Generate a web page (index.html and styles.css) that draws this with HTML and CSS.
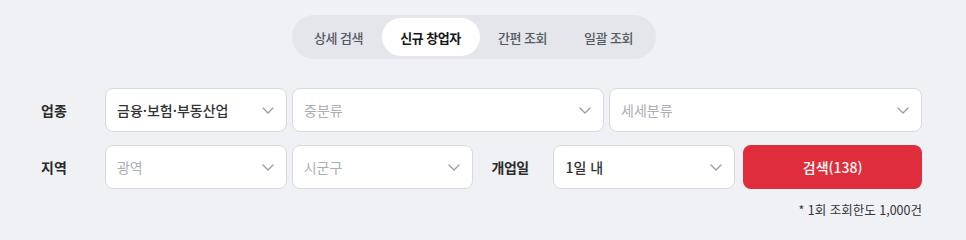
FILE: index.html
```html
<!DOCTYPE html>
<html lang="ko">
<head>
<meta charset="utf-8">
<link rel="stylesheet" href="styles.css">
</head>
<body>
<div class="tabs-row">
  <div class="tabs">
    <div class="tab">상세 검색</div>
    <div class="tab active">신규 창업자</div>
    <div class="tab">간편 조회</div>
    <div class="tab">일괄 조회</div>
  </div>
</div>
<div class="form">
  <div class="row">
    <div class="label">업종</div>
    <div class="select w182"><span class="val">금융·보험·부동산업</span><svg class="chev" width="12" height="7" viewBox="0 0 12 7"><polyline points="1,1 6,6 11,1"/></svg></div>
    <div class="select w312 gap"><span class="ph">중분류</span><svg class="chev" width="12" height="7" viewBox="0 0 12 7"><polyline points="1,1 6,6 11,1"/></svg></div>
    <div class="select w313 gap"><span class="ph">세세분류</span><svg class="chev" width="12" height="7" viewBox="0 0 12 7"><polyline points="1,1 6,6 11,1"/></svg></div>
  </div>
  <div class="row row2">
    <div class="label">지역</div>
    <div class="select w182"><span class="ph">광역</span><svg class="chev" width="12" height="7" viewBox="0 0 12 7"><polyline points="1,1 6,6 11,1"/></svg></div>
    <div class="select w181 gap"><span class="ph">시군구</span><svg class="chev" width="12" height="7" viewBox="0 0 12 7"><polyline points="1,1 6,6 11,1"/></svg></div>
    <div class="label label2">개업일</div>
    <div class="select w182"><span class="val">1일 내</span><svg class="chev" width="12" height="7" viewBox="0 0 12 7"><polyline points="1,1 6,6 11,1"/></svg></div>
    <button class="search">검색(138)</button>
  </div>
  <div class="note">* 1회 조회한도 1,000건</div>
</div>
</body>
</html>
```
FILE: styles.css
```css
* { box-sizing: border-box; }
body {
  margin: 0;
  background: #f0f1f5;
  font-family: "Noto Sans CJK KR", "Noto Sans", sans-serif;
  color: #222;
}
.tabs-row {
  display: flex;
  justify-content: center;
  padding-top: 15px;
  padding-right: 19px;
}
.tabs {
  display: flex;
  height: 44px;
  padding: 3px 4px;
  background: #e4e6ec;
  border-radius: 22px;
}
.tab {
  display: flex;
  align-items: center;
  justify-content: center;
  width: 86px;
  height: 38px;
  font-size: 13px;
  letter-spacing: -0.5px;
  font-weight: 500;
  color: #54585f;
  border-radius: 19px;
}
.tab.active {
  width: 98px;
  background: #fff;
  color: #151515;
  font-weight: 700;
}
.form {
  width: 881px;
  margin-left: 41px;
  margin-top: 29px;
}
.row {
  display: flex;
  align-items: center;
  height: 44px;
}
.row2 { margin-top: 13px; }
.label {
  width: 64px;
  font-size: 14px;
  font-weight: 700;
  color: #2b2b2b;
}
.label2 {
  width: 62px;
  margin-left: 19px;
  letter-spacing: -0.5px;
}
.select {
  display: flex;
  align-items: center;
  justify-content: space-between;
  height: 44px;
  padding: 0 12px 0 11px;
  background: #fff;
  border: 1px solid #d8dade;
  border-radius: 8px;
  font-size: 14px;
}
.gap { margin-left: 5px; }
.w182 { width: 182px; }
.w181 { width: 181px; }
.w312 { width: 312px; }
.w313 { width: 313px; }
.val { color: #333; font-weight: 500; }
.ph { color: #abaeb4; }
.chev polyline {
  fill: none;
  stroke: #9b9ea4;
  stroke-width: 1.4;
  stroke-linecap: round;
  stroke-linejoin: round;
}
.search {
  width: 179px;
  height: 44px;
  margin-left: 8px;
  border: none;
  border-radius: 8px;
  background: #e02d3b;
  color: #fff;
  font-family: inherit;
  font-size: 14px;
  font-weight: 500;
}
.note {
  margin-top: 11px;
  text-align: right;
  font-size: 12.5px;
  color: #333;
}
```
